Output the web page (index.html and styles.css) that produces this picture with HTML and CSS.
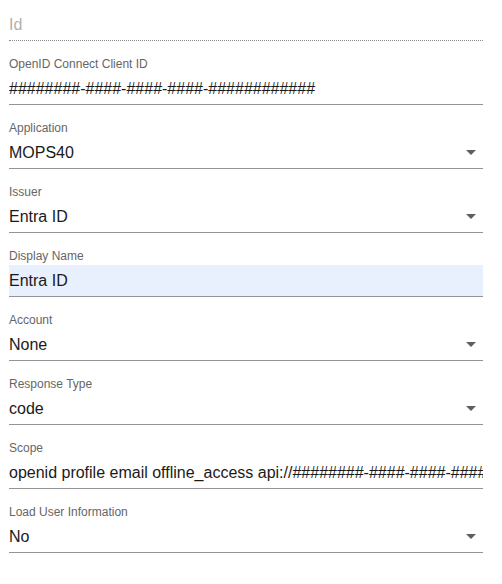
FILE: index.html
```html
<!DOCTYPE html>
<html>
<head>
<meta charset="utf-8">
<link rel="stylesheet" href="styles.css">
</head>
<body>
<form class="form">
  <div class="field field-first">
    <div class="control control-dotted"><span class="placeholder">Id</span></div>
  </div>
  <div class="field">
    <div class="label">OpenID Connect Client ID</div>
    <div class="control"><span class="value">########-####-####-####-############</span></div>
  </div>
  <div class="field">
    <div class="label">Application</div>
    <div class="control select"><span class="value">MOPS40</span><svg class="arrow" width="10" height="5" viewBox="0 0 10 5"><polygon points="0,0 10,0 5,5"/></svg></div>
  </div>
  <div class="field">
    <div class="label">Issuer</div>
    <div class="control select"><span class="value">Entra ID</span><svg class="arrow" width="10" height="5" viewBox="0 0 10 5"><polygon points="0,0 10,0 5,5"/></svg></div>
  </div>
  <div class="field">
    <div class="label">Display Name</div>
    <div class="control autofill"><span class="value">Entra ID</span></div>
  </div>
  <div class="field">
    <div class="label">Account</div>
    <div class="control select"><span class="value">None</span><svg class="arrow" width="10" height="5" viewBox="0 0 10 5"><polygon points="0,0 10,0 5,5"/></svg></div>
  </div>
  <div class="field">
    <div class="label">Response Type</div>
    <div class="control select"><span class="value">code</span><svg class="arrow" width="10" height="5" viewBox="0 0 10 5"><polygon points="0,0 10,0 5,5"/></svg></div>
  </div>
  <div class="field">
    <div class="label">Scope</div>
    <div class="control"><span class="value">openid profile email offline_access api://########-####-####-####-############/.default</span></div>
  </div>
  <div class="field">
    <div class="label">Load User Information</div>
    <div class="control select"><span class="value">No</span><svg class="arrow" width="10" height="5" viewBox="0 0 10 5"><polygon points="0,0 10,0 5,5"/></svg></div>
  </div>
</form>
</body>
</html>
```
FILE: styles.css
```css
html, body {
  margin: 0;
  padding: 0;
  background: #ffffff;
}
body {
  padding: 9px 19px 0 9px;
}
.form {
  display: flex;
  flex-direction: column;
  width: 474px;
}
.field {
  display: flex;
  flex-direction: column;
  padding-top: 16px;
}
.field-first {
  padding-top: 0;
}
.label {
  font-family: "Liberation Sans", Arial, sans-serif;
  font-size: 12px;
  line-height: 14px;
  color: #666666;
  margin-bottom: 2px;
}
.control {
  height: 31px;
  display: flex;
  align-items: center;
  border-bottom: 1px solid #949494;
  overflow: hidden;
  white-space: nowrap;
  position: relative;
}
.control-dotted {
  border-bottom: 1px dotted #8a8a8a;
}
.autofill {
  background: #e8f0fe;
}
.value {
  font-family: "Liberation Sans", Arial, sans-serif;
  font-size: 16px;
  color: #1a1a1a;
}
.placeholder {
  font-family: "Liberation Sans", Arial, sans-serif;
  font-size: 16px;
  color: #b0b0b0;
}
.select {
  justify-content: space-between;
}
.arrow {
  flex: none;
  margin-right: 7px;
  fill: #5f5f5f;
}
```
